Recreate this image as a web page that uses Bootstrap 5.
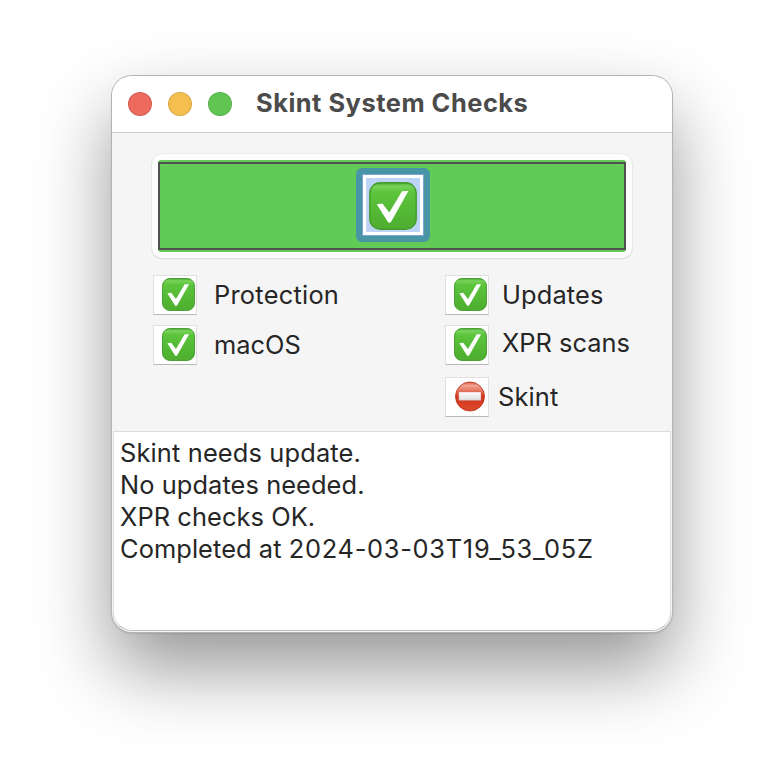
<!DOCTYPE html>
<html lang="en">
  <head>
    <meta charset="UTF-8" />
    <meta name="viewport" content="width=device-width, initial-scale=1.0" />
    <title>Skint System Checks</title>
    <link
      rel="stylesheet"
      href="https://cdn.jsdelivr.net/npm/bootstrap@5.3.5/dist/css/bootstrap.min.css"
    />
    <style>
      body {
        font-family: Inter, "Liberation Sans", sans-serif;
        font-size: 25.4px;
        line-height: 32px;
        color: #262626;
        padding-top: 76px;
        height: 780px;
      }
      .app-window {
        width: 560px;
        height: 556px;
        border-radius: 20px;
        background: #f5f5f5;
        box-shadow: 0 0 0 1px #b3b3b3, 0 1px 2px rgba(0, 0, 0, 0.3),
          0 36px 74px rgba(0, 0, 0, 0.42);
      }
      .title-bar {
        height: 57px;
        padding: 0 16px;
        border-bottom: 1px solid #cdcdcd;
      }
      .light {
        width: 24px;
        height: 24px;
        border-radius: 50%;
        border: 1px solid rgba(0, 0, 0, 0.12);
      }
      .light-close { background: #ed6a5e; }
      .light-min { background: #f5bf4f; }
      .light-zoom { background: #61c554; }
      .window-title {
        margin: 0 0 3px 24px;
        font-size: 25.4px;
        font-weight: 700;
        line-height: 32px;
        letter-spacing: 0.52px;
        color: #4b4b4b;
      }
      .checks {
        height: 298px;
        padding: 21px 40px 0;
      }
      .result {
        height: 104px;
        padding: 6px;
        border-radius: 10px;
        background: #fdfdfd;
        box-shadow: 0 0 1px 1px rgba(0, 0, 0, 0.04), 0 1px 2px rgba(0, 0, 0, 0.08);
      }
      .result-fill {
        height: 92px;
        padding: 2px 0;
        border-radius: 3px;
        background: #62ca56;
      }
      .result-frame {
        height: 88px;
        border: 2px solid #505050;
      }
      .focus-box {
        width: 74px;
        height: 74px;
        border-radius: 6px;
        background: #4896a5;
        margin: 0 0 2px 2px;
      }
      .focus-inner {
        width: 62px;
        height: 62px;
        padding-top: 2px;
        border: 4px solid #fff;
        outline: 1px solid #7da4d6;
        outline-offset: -1px;
        background: #bdd4f7;
      }
      .check-grid { padding: 17px 0 0 1px; }
      .left-col { width: 292px; }
      .check-cell {
        width: 44px;
        height: 40px;
        padding: 2px 2px 0 8px;
        border: 1px solid #e0e0e0;
        border-bottom-color: #b8b8b8;
        background: #fff;
        line-height: 0;
      }
      .row-one { height: 50px; }
      .row-two { height: 52px; }
      .check-label {
        margin: 4px 0 0 13px;
        letter-spacing: 0.15px;
      }
      .left-col .check-label { margin-left: 17px; }
      .label-protection { letter-spacing: 0.25px; }
      .label-macos { letter-spacing: 0; }
      .label-xpr {
        margin-top: 2px;
        letter-spacing: 0;
      }
      .label-skint { margin-left: 9px; }
      .log {
        height: 200px;
        margin: 0 1px;
        padding: 5px 6px;
        border: 1px solid #dcdcdc;
        border-bottom: 1px solid #bdbdbd;
        border-radius: 0 0 19px 19px;
        background: #fff;
        letter-spacing: 0.08px;
      }
      .log-first { letter-spacing: 0.15px; }
      .log-stamp { letter-spacing: 0.72px; }
    </style>
    <script src="https://cdn.jsdelivr.net/npm/bootstrap@5.3.5/dist/js/bootstrap.bundle.min.js"></script>
  </head>
  <body class="bg-white overflow-hidden">
    <!-- shared icons -->
    <svg width="0" height="0" class="position-absolute" aria-hidden="true">
      <defs>
        <linearGradient id="greenFill" x1="0" y1="0" x2="0" y2="1">
          <stop offset="0" stop-color="#4ba637" />
          <stop offset="0.07" stop-color="#79d45a" />
          <stop offset="0.2" stop-color="#5dc43d" />
          <stop offset="0.8" stop-color="#4fb331" />
          <stop offset="1" stop-color="#51ad30" />
        </linearGradient>
        <linearGradient id="redFill" x1="0" y1="0" x2="0" y2="1">
          <stop offset="0" stop-color="#dc5540" />
          <stop offset="0.12" stop-color="#f0a494" />
          <stop offset="0.35" stop-color="#e3664f" />
          <stop offset="0.5" stop-color="#d3351d" />
          <stop offset="1" stop-color="#dc4a2c" />
        </linearGradient>
        <linearGradient id="barFill" x1="0" y1="0" x2="0" y2="1">
          <stop offset="0" stop-color="#ffffff" />
          <stop offset="1" stop-color="#dedede" />
        </linearGradient>
      </defs>
      <symbol id="iconCheck" viewBox="0 0 48 48">
        <rect x="0.8" y="0.8" width="46.4" height="46.4" rx="10.5" fill="url(#greenFill)" stroke="#439c2c" stroke-width="1.4" />
        <path d="M7.8 22.2L13.4 21.6L20.3 30.4L33 9.2L39.4 9L21.7 40.5L19.2 40.5Z" fill="#fff" />
      </symbol>
      <symbol id="iconStop" viewBox="0 0 32 32">
        <circle cx="16" cy="16.5" r="14.5" fill="url(#redFill)" stroke="#bd3a24" stroke-width="0.9" />
        <rect x="4.8" y="12" width="22.2" height="8.4" rx="0.6" fill="url(#barFill)" stroke="#c0695b" stroke-width="0.4" />
      </symbol>
    </svg>

    <main class="app-window mx-auto overflow-hidden">
      <header class="title-bar d-flex align-items-center bg-white">
        <div class="d-flex gap-3">
          <span class="light light-close"></span>
          <span class="light light-min"></span>
          <span class="light light-zoom"></span>
        </div>
        <h1 class="window-title">Skint System Checks</h1>
      </header>

      <section class="checks">
        <div class="result">
          <div class="result-fill">
            <div class="result-frame d-flex align-items-center justify-content-center">
              <div class="focus-box d-flex align-items-center justify-content-center">
                <div class="focus-inner d-flex align-items-center justify-content-center">
                  <svg width="48" height="48"><use href="#iconCheck" /></svg>
                </div>
              </div>
            </div>
          </div>
        </div>

        <div class="check-grid d-flex">
          <div class="left-col">
            <div class="row-one d-flex align-items-start">
              <div class="check-cell"><svg width="33" height="33"><use href="#iconCheck" /></svg></div>
              <div class="check-label label-protection">Protection</div>
            </div>
            <div class="row-two d-flex align-items-start">
              <div class="check-cell"><svg width="33" height="33"><use href="#iconCheck" /></svg></div>
              <div class="check-label label-macos">macOS</div>
            </div>
          </div>
          <div>
            <div class="row-one d-flex align-items-start">
              <div class="check-cell"><svg width="33" height="33"><use href="#iconCheck" /></svg></div>
              <div class="check-label">Updates</div>
            </div>
            <div class="row-two d-flex align-items-start">
              <div class="check-cell"><svg width="33" height="33"><use href="#iconCheck" /></svg></div>
              <div class="check-label label-xpr">XPR scans</div>
            </div>
            <div class="d-flex align-items-start">
              <div class="check-cell"><svg width="32" height="32"><use href="#iconStop" /></svg></div>
              <div class="check-label label-skint">Skint</div>
            </div>
          </div>
        </div>
      </section>

      <section class="log text-nowrap">
        <div class="log-first">Skint needs update.</div>
        <div>No updates needed.</div>
        <div>XPR checks OK.</div>
        <div>Completed at <span class="log-stamp">2024-03-03T19_53_05Z</span></div>
      </section>
    </main>
  </body>
</html>
